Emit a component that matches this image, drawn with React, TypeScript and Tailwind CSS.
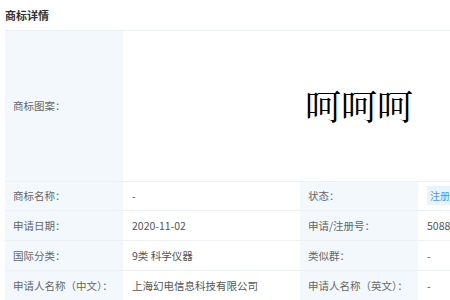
import React from 'react'

const label = 'bg-[#f2f8fc] text-[#666] pl-[8px] text-left font-normal whitespace-nowrap'
const cell = 'text-[#555] pl-[9px] whitespace-nowrap'

const App = () => {
  return (
    <div className="w-[450px] h-[300px] overflow-hidden bg-white font-['Noto_Sans_CJK_SC',sans-serif] text-[10.5px]">
      <h1 className="h-[30px] leading-[30px] pl-[5px] text-[11px] font-bold text-[#333]">商标详情</h1>
      <table className="ml-[5px] border-collapse table-fixed w-[590px]">
        <colgroup>
          <col className="w-[118px]" />
          <col className="w-[177px]" />
          <col className="w-[118px]" />
          <col className="w-[177px]" />
        </colgroup>
        <tbody>
          <tr className="h-[151px] border-t border-[#eef1f4]">
            <th className={label}>商标图案：</th>
            <td colSpan={3} className="text-center pt-[4px] font-['Liberation_Serif','Noto_Serif_CJK_SC','Noto_Sans_CJK_SC',serif] text-[36px] text-black">
              呵呵呵
            </td>
          </tr>
          <tr className="h-[29px] border-t border-[#eef1f4]">
            <th className={label}>商标名称：</th>
            <td className={cell}>-</td>
            <th className={label}>状态：</th>
            <td className={cell}>
              <span className="bg-[#e8f3fd] text-[#4a9be0] text-[10px] px-[3px] py-[2px]">注册申请中</span>
            </td>
          </tr>
          <tr className="h-[30px] border-t border-[#eef1f4]">
            <th className={label}>申请日期：</th>
            <td className={cell}>2020-11-02</td>
            <th className={label}>申请/注册号：</th>
            <td className={cell}>50888888</td>
          </tr>
          <tr className="h-[30px] border-t border-[#eef1f4]">
            <th className={label}>国际分类：</th>
            <td className={cell}>9类 科学仪器</td>
            <th className={label}>类似群：</th>
            <td className={cell}>-</td>
          </tr>
          <tr className="h-[30px] border-t border-[#eef1f4]">
            <th className={label}>申请人名称（中文）：</th>
            <td className={`${cell} text-[#3d8ee0]`}>上海幻电信息科技有限公司</td>
            <th className={label}>申请人名称（英文）：</th>
            <td className={cell}>-</td>
          </tr>
        </tbody>
      </table>
    </div>
  )
}

export default App
